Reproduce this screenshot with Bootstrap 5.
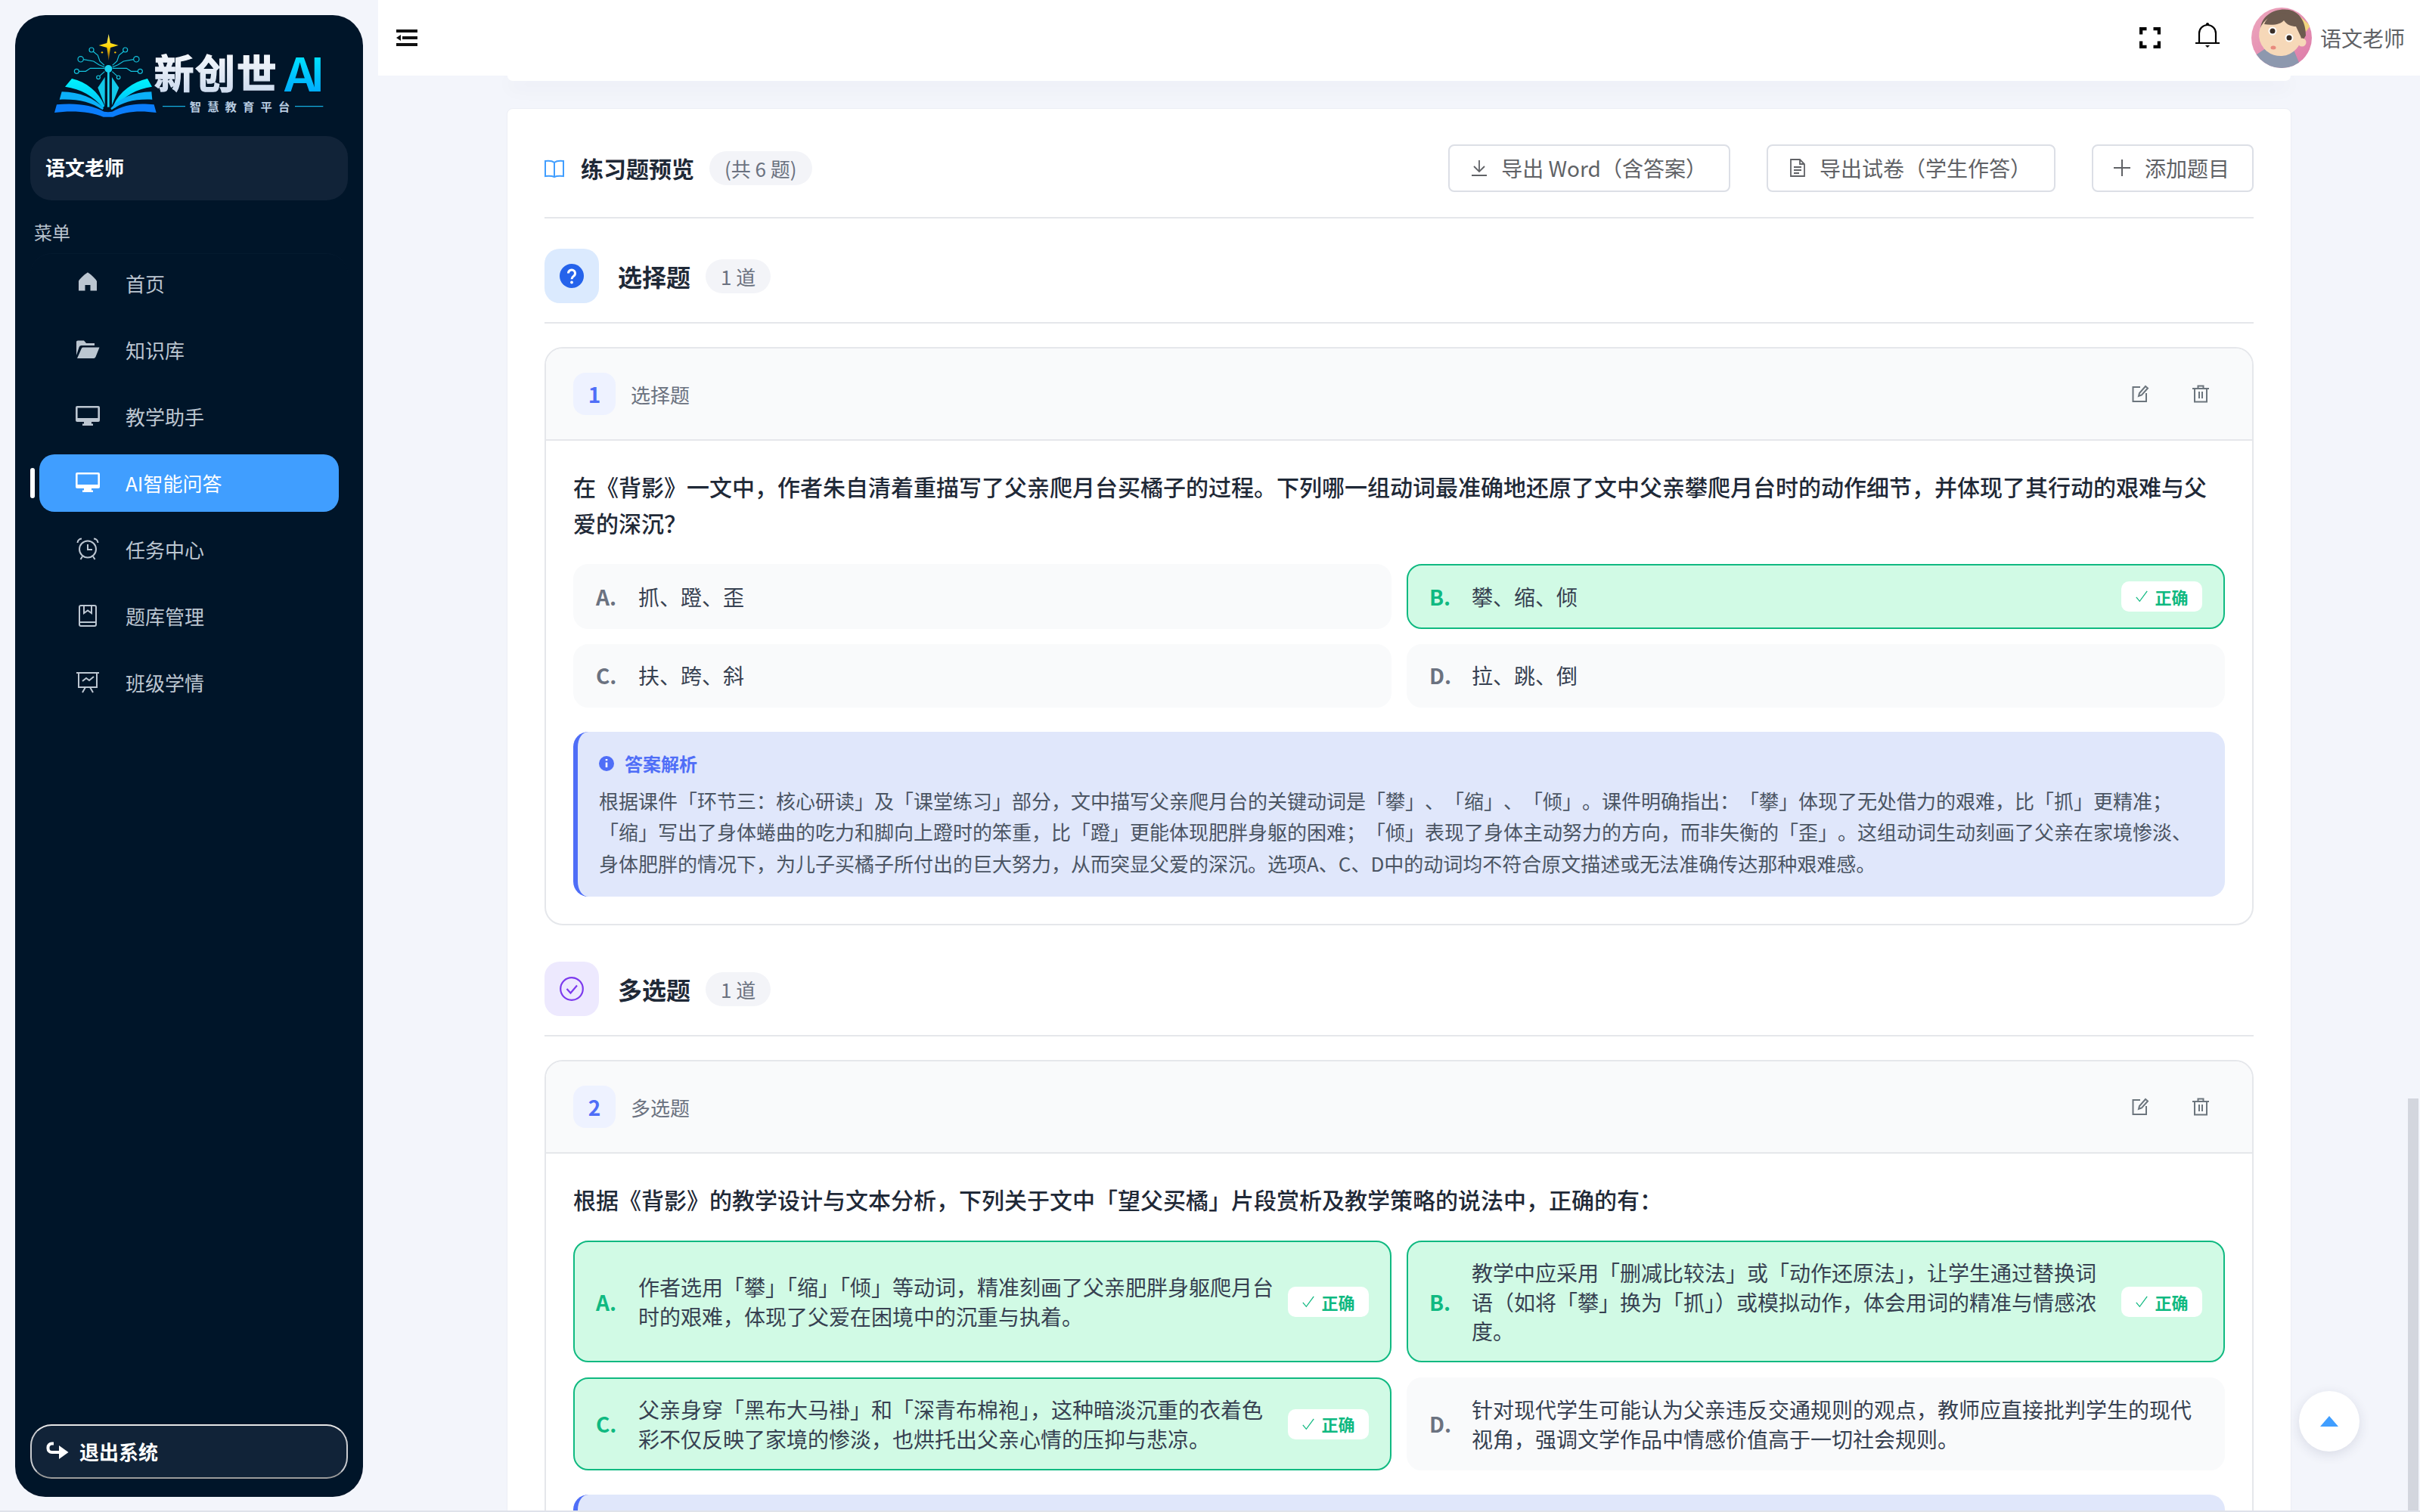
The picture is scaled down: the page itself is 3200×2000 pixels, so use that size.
<!DOCTYPE html>
<html lang="zh-CN">
<head>
<meta charset="UTF-8">
<title>新创世 AI - 练习题预览</title>
<link rel="stylesheet" href="https://cdn.jsdelivr.net/npm/bootstrap@5.3.0/dist/css/bootstrap.min.css">
<style>
html, body { height: 2000px; overflow: hidden; }
body { background: #f3f5fb; font-family: "Noto Sans CJK SC", sans-serif; color: #1f2937; }

/* sidebar */
.side-wrap { width: 500px; padding: 20px; height: 2000px; flex-shrink: 0; }
.side-box { background: #001529; border-radius: 40px; height: 1960px; padding: 10px 20px 24px; }
.side-logo { display: block; width: 420px; height: 150px; }
.side-user { height: 85px; background: #112338; border-radius: 28px; padding: 0 0 4px 20px; color: #fff; font-size: 26px; font-weight: 700; }
.side-title { font-size: 24px; color: #b9c3ce; margin: 25px 0 11px 5px; line-height: 34px; }
.side-menu { border-top: 1px solid #041a2f; border-radius: 28px 28px 0 0; padding-top: 1px; }
.side-item { height: 76px; margin: 0 12px 12px; padding: 0 0 2px 48px; border-radius: 20px; color: #bcc6d1; font-size: 26px; position: relative; text-decoration: none; }
.side-item svg { width: 32px; height: 32px; margin-right: 34px; flex-shrink: 0; }
.side-item.on { background: #409eff; color: #fff; }
.side-item.on::before { content: ""; position: absolute; left: -12px; top: 18px; width: 6px; height: 40px; background: #fff; border-radius: 3px; }
.side-exit { height: 72px; background: #112338; border: 2px solid #c9cbcf; border-top-color: #e6e6e6; border-bottom-color: #9b9b9b; border-radius: 28px; padding: 0 0 2px 19px; color: #fff; font-size: 26px; font-weight: 700; gap: 14px; }

/* top bar */
.top-bar { height: 100px; background: #fff; padding: 0 20px 0 24px; position: relative; z-index: 2; flex-shrink: 0; }
.top-name { font-size: 28px; color: #606266; margin-left: 11px; }

/* page */
.main-col { min-width: 0; height: 2000px; overflow: hidden; }
.page-body { padding: 0 170px; }
.prev-end { height: 7px; background: #fff; border-radius: 0 0 8px 8px; box-shadow: 0 8px 24px rgba(30, 40, 80, .07); margin: 0 1px 36px; }
.main-panel { border: 1px solid #eceef5; border-radius: 8px; padding: 47px 49px 0; }
.panel-head { padding-bottom: 33px; border-bottom: 2px solid #e5e7eb; margin-bottom: 40px; box-sizing: content-box; height: 63px; }
.panel-title { font-size: 30px; font-weight: 700; color: #1f2937; margin: 0 20px 0 22px; }
.count-pill { height: 45px; padding: 0 20px; border-radius: 23px; background: #f3f4f8; color: #6b7280; font-size: 26px; font-weight: 400; }
.tool-btn { height: 63px; padding: 0 32px 2px 28px; border: 2px solid #dcdfe6; border-radius: 8px; background: #fff; color: #606266; font-size: 28px; gap: 18px; white-space: nowrap; }
.tool-btn.wd { padding-right: 29px; }
.tool-btn.pp { padding-right: 30px; }
.tool-btn.ad { padding-right: 30px; padding-left: 26px; }
.kind-head { padding-bottom: 25px; border-bottom: 2px solid #e5e7eb; margin-bottom: 31px; }
.kind-ico { width: 72px; height: 72px; border-radius: 20px; flex-shrink: 0; }
.kind-ico.blue { background: #dbeafe; }
.kind-ico.violet { background: #ede9fe; }
.kind-name { font-size: 32px; font-weight: 700; margin: 0 20px 0 25px; color: #1f2937; }

.quest-card { border: 2px solid #e5e7eb; border-radius: 24px; margin-bottom: 48px; overflow: hidden; }
.quest-head { padding: 32px 36px; background: #f9fafb; border-bottom: 2px solid #e5e7eb; }
.quest-num { width: 56px; height: 56px; border-radius: 16px; background: #eef2ff; color: #4f6ef7; font-size: 28px; font-weight: 700; }
.quest-kind { font-size: 26px; color: #6b7280; margin-left: 20px; }
.quest-tools { gap: 56px; padding-right: 20px; }
.quest-body { padding: 36px; }
.quest-text { font-size: 30px; line-height: 48px; font-weight: 500; color: #1f2937; margin: 0 0 31px; }

.opt-grid { display: grid; grid-template-columns: 1fr 1fr; gap: 20px; margin-bottom: 32px; }
.opt-item { padding: 20.750px 28px; border: 2px solid #f9fafb; border-radius: 20px; background: #f9fafb; font-size: 28px; line-height: 38.500px; color: #374151; }
.opt-item b { width: 56px; flex-shrink: 0; color: #6b7280; font-weight: 700; }
.opt-item.good { background: #d1fae5; border-color: #10b981; }
.opt-item.good b { color: #10b981; }
.opt-good { width: 107px; height: 40px; margin-left: 14px; border-radius: 10px; background: #fff; color: #10b981; font-size: 22px; font-weight: 700; gap: 8px; flex-shrink: 0; }

.note-box { background: #e0e7fb; border-left: 6px solid #4f6ef7; border-radius: 20px; padding: 26px 34px 24px 28px; }
.note-title { font-size: 24px; line-height: 32px; font-weight: 700; color: #4f6ef7; margin-bottom: 12px; gap: 14px; }
.note-text { font-size: 26px; line-height: 41.600px; color: #4b5563; margin: 0; text-spacing-trim: space-all; }
.note-cut { height: 200px; }

/* overlays */
.to-top { position: fixed; left: 3040px; top: 1840px; width: 80px; height: 80px; border-radius: 50%; background: #fff; box-shadow: 0 4px 16px rgba(30, 40, 80, .12); z-index: 3; }
.scroll-thumb { position: fixed; left: 3184px; top: 1453px; width: 14px; height: 545px; background: #d3d6de; z-index: 3; }
.page-edge { position: fixed; left: 0; right: 0; bottom: 0; height: 2px; background: #dfe2ea; z-index: 4; }
</style>
</head>
<body>
<svg width="0" height="0" class="position-absolute">
  <symbol id="i-screen" viewBox="0 0 32 32"><path fill="currentColor" fill-rule="evenodd" d="M2 3h28a2 2 0 0 1 2 2v17a2 2 0 0 1-2 2H21v2.500h2V29H9v-2.500h2V24H2a2 2 0 0 1-2-2V5a2 2 0 0 1 2-2Zm.6 2.600V19h26.800V5.600Z"/></symbol>
  <symbol id="i-edit" viewBox="0 0 24 24"><path fill="none" stroke="currentColor" stroke-width="2" d="M12 3H2.500v19H20V11"/><path fill="none" stroke="currentColor" stroke-width="2" d="M10 15l1-4 8-9 3 2.500-8 9Z"/></symbol>
  <symbol id="i-trash" viewBox="0 0 24 24"><path fill="none" stroke="currentColor" stroke-width="2" d="M1 5h22M8.500 5V1.500h7V5M4 5v17.500h16V5M10 9v9M14 9v9"/></symbol>
  <symbol id="i-check" viewBox="0 0 20 20"><path fill="none" stroke="currentColor" stroke-width="1.400" d="M2 11l5 6L18 2"/></symbol>
  <symbol id="i-info" viewBox="0 0 20 20"><circle cx="10" cy="10" r="10" fill="#4f6ef7"/><path fill="none" stroke="#fff" stroke-width="2.600" d="M10 8.500V15M10 4v2.200"/></symbol>
</svg>

<div class="d-flex">
  <aside class="side-wrap">
    <div class="side-box d-flex flex-column">
      <svg class="side-logo" viewBox="0 0 1260 450">
        <defs>
          <linearGradient id="lgStar" x1="0" y1="0" x2="0" y2="1"><stop offset="0" stop-color="#fff36a"/><stop offset=".5" stop-color="#ffd400"/><stop offset="1" stop-color="#ff9a00" stop-opacity=".4"/></linearGradient>
          <linearGradient id="lgName" x1="0" y1="0" x2="0" y2="1"><stop offset="0" stop-color="#fff"/><stop offset="1" stop-color="#c6d6ec"/></linearGradient>
          <linearGradient id="lgAi" x1="0" y1="0" x2="0" y2="1"><stop offset="0" stop-color="#00f0ff"/><stop offset="1" stop-color="#009dff"/></linearGradient>
          <linearGradient id="lgPage" x1="0" y1="0" x2="0" y2="1"><stop offset="0" stop-color="#00f4ff"/><stop offset="1" stop-color="#00bdf5"/></linearGradient>
        </defs>
        <path fill="url(#lgStar)" d="M311 45l7 36 32 9-32 9-7 52-7-52-32-9 32-9Z"/>
        <circle cx="285" cy="118" r="3.500" fill="#ffc400"/><circle cx="337" cy="118" r="3.500" fill="#ffc400"/>
        <g fill="none" stroke="#14c4de" stroke-width="3.500">
          <circle cx="243" cy="108" r="9"/><path d="M250 115l18 14 8 24 18 16"/>
          <circle cx="377" cy="108" r="9"/><path d="M370 115l-18 14-8 24-18 16"/>
          <circle cx="200" cy="145" r="11"/><path d="M211 146l40 7 22 14 22 9"/>
          <circle cx="421" cy="145" r="11"/><path d="M410 146l-40 7-22 14-22 9"/>
          <circle cx="184" cy="193" r="9"/><path d="M193 193h27l18-12h57"/>
          <circle cx="436" cy="193" r="9"/><path d="M427 193h-27l-18-12h-56"/>
          <circle cx="270" cy="217" r="7"/><path d="M275 212l20-18"/>
          <circle cx="350" cy="217" r="7"/><path d="M345 212l-20-18"/>
        </g>
        <circle cx="310" cy="183" r="15" fill="#19d3f0"/>
        <path fill="#19d3f0" d="M306 190h8v145h-8Z"/>
        <path fill="#12c8e8" d="M296 216v112l-28-70Z M324 216v112l28-70Z"/>
        <path fill="url(#lgPage)" d="M138 254l27-32c58 14 104 50 130 108l-7 8c-38-48-86-74-150-84Z"/>
        <path fill="url(#lgPage)" d="M483 254l-18-32c-58 14-110 50-136 108l7 8c38-48 83-74 147-84Z"/>
        <path fill="#0bb0f7" d="M116 305l9-31c72 2 128 24 166 66l-4 6c-46-32-100-44-171-41Z"/>
        <path fill="#0bb0f7" d="M484 305l-3-31c-72 2-124 24-162 66l4 6c46-32 90-44 161-41Z"/>
        <path fill="#0a7dfb" d="M96 357l9-32c78-8 140 2 188 28l16 2 16-2c48-26 92-36 166-28l9 32c-70-10-122-4-172 17h-38c-50-21-124-27-194-17Z"/>
        <text x="491" y="262" font-family="'Noto Sans CJK SC', sans-serif" font-weight="700" font-size="158" fill="url(#lgName)" stroke="url(#lgName)" stroke-width="4" textLength="486">新创世</text>
        <text x="1003" y="272" font-family="Inter, sans-serif" font-weight="600" font-size="186" fill="url(#lgAi)" textLength="162">AI</text>
        <path stroke="#15aee0" stroke-width="3.500" d="M525 332h90M1050 332h112"/>
        <text x="632" y="350" font-family="'Noto Sans CJK SC', sans-serif" font-weight="700" font-size="46" fill="#b7cbe0" textLength="398">智慧教育平台</text>
      </svg>

      <div class="side-user d-flex align-items-center">语文老师</div>
      <div class="side-title">菜单</div>

      <nav class="side-menu flex-grow-1">
        <a class="side-item d-flex align-items-center" href="#">
          <svg viewBox="0 0 32 32"><path fill="currentColor" d="M16 2.500C14.500 2.500 4 12 4 14v12.500h8.500V19h7v7.500H28V14C28 12 17.500 2.500 16 2.500Z"/></svg>首页
        </a>
        <a class="side-item d-flex align-items-center" href="#">
          <svg viewBox="0 0 32 32"><path fill="currentColor" d="M1 24V6q0-1.500 2-1.500h8L14 8h11v3H7.500q-2 0-2.800 2Zm1 4l6-13.500q.5-1 2-1h21.500l-5 12.500q-1 2-2.500 2Z"/></svg>知识库
        </a>
        <a class="side-item d-flex align-items-center" href="#">
          <svg viewBox="0 0 32 32"><use href="#i-screen"/></svg>教学助手
        </a>
        <a class="side-item on d-flex align-items-center" href="#">
          <svg viewBox="0 0 32 32"><use href="#i-screen"/></svg>AI智能问答
        </a>
        <a class="side-item d-flex align-items-center" href="#">
          <svg viewBox="0 0 32 32"><g fill="none" stroke="currentColor" stroke-width="2"><circle cx="16" cy="16.500" r="11"/><path d="M16 10v7h6M2.500 8Q3 3 8 2.500M29.500 8Q29 3 24 2.500M9 26l-2.500 4M23 26l2.500 4"/></g></svg>任务中心
        </a>
        <a class="side-item d-flex align-items-center" href="#">
          <svg viewBox="0 0 32 32"><g fill="none" stroke="currentColor" stroke-width="2"><rect x="5" y="3" width="22" height="27" rx="2"/><path d="M5 25h22M11 3v10l5-3.500 5 3.500V3"/></g></svg>题库管理
        </a>
        <a class="side-item d-flex align-items-center" href="#">
          <svg viewBox="0 0 32 32"><g fill="none" stroke="currentColor" stroke-width="2"><path d="M1 4h30M4 4v19h24V4M9 15l5-4 4 3 6-5M13 23l-4 7M19 23l4 7"/></g></svg>班级学情
        </a>
      </nav>

      <div class="side-exit d-flex align-items-center">
        <svg width="30" height="24" viewBox="0 0 30 24"><path fill="none" stroke="#fff" stroke-width="4" d="M10 2.500H7.500a5 5 0 0 0-5 5V9a5 5 0 0 0 5 5H18"/><path fill="#fff" d="M17 5l12.500 9L17 23Z"/></svg>
        退出系统
      </div>
    </div>
  </aside>

  <div class="main-col flex-grow-1 d-flex flex-column">
    <header class="top-bar d-flex align-items-center">
      <svg width="28" height="24" viewBox="0 0 28 24"><path fill="#111" d="M0 1h28v4H0Zm8 9h20v4H8Zm-8 2l6-4v8Zm0 7h28v4H0Z"/></svg>
      <svg class="ms-auto" width="28" height="28" viewBox="0 0 28 28" style="margin-right:46px"><path fill="none" stroke="#000" stroke-width="4.500" d="M9.500 2H2v7.500M18.500 2H26v7.500M9.500 26H2v-7.500M18.500 26H26v-7.500"/></svg>
      <svg width="32" height="34" viewBox="0 0 32 34" style="margin:-6px 42px 0 0"><path fill="none" stroke="#000" stroke-width="2.200" d="M5 26V14a11 11 0 0 1 22 0v12M0 27h32"/><circle cx="16" cy="2" r="2" fill="#000"/><path fill="#000" d="M13 30h6l-3 3Z"/></svg>
      <svg width="80" height="80" viewBox="0 0 80 80" class="rounded-circle">
        <defs><linearGradient id="lgAv" x1="0" y1="0" x2="1" y2="1"><stop offset="0" stop-color="#eda7bd"/><stop offset="1" stop-color="#dd7aa8"/></linearGradient></defs>
        <rect width="80" height="80" fill="url(#lgAv)"/>
        <path fill="#f2d57f" d="M58 6l20 18-6 8Z"/>
        <path fill="#8d98ae" d="M4 64l18-12 34 4 10 24H10Z"/>
        <path fill="#6d5b4f" d="M12 30C12 10 32 0 50 3c14 3 22 16 22 34l-6 10-8-22c-8 0-14-2-20-6-2 6-10 8-24 12Z"/>
        <ellipse cx="38" cy="37" rx="28" ry="27" fill="#f6d8b8" transform="rotate(18 38 37)"/>
        <path fill="#6d5b4f" d="M17 22C22 6 50 2 62 16c5 7 7 16 5 26l-8-17c-6 0-12-2-16-8-4 5-14 7-26 5Z"/>
        <circle cx="67" cy="46" r="5.500" fill="#f6d8b8"/>
        <circle cx="28" cy="31" r="5.500" fill="#fff"/><circle cx="28" cy="31" r="3.500" fill="#3a2e28"/>
        <circle cx="50" cy="40" r="5.500" fill="#fff"/><circle cx="50" cy="40" r="3.500" fill="#3a2e28"/>
        <ellipse cx="29" cy="53" rx="3.500" ry="2.500" fill="#e88a7d"/>
      </svg>
      <span class="top-name">语文老师</span>
    </header>

    <main class="page-body">
      <div class="prev-end"></div>
      <div class="main-panel bg-white">
        <div class="panel-head d-flex align-items-center">
          <svg width="26" height="24" viewBox="0 0 26 24"><path fill="none" stroke="#409eff" stroke-width="2" d="M13 4C10 1.500 5 1.500 1 2v20c4-.5 9-.5 12 1 3-1.500 8-1.500 12-1V2c-4-.5-9-.5-12 2Zm0 0v19"/></svg>
          <span class="panel-title">练习题预览</span>
          <span class="count-pill d-flex align-items-center">(共 6 题)</span>
          <div class="ms-auto d-flex" style="gap:48px">
            <button class="btn tool-btn wd d-flex align-items-center">
              <svg width="22" height="22" viewBox="0 0 22 22"><path fill="none" stroke="#606266" stroke-width="1.800" d="M11 1v14M4 9l7 7 7-7M1 21h20"/></svg>导出 Word（含答案）
            </button>
            <button class="btn tool-btn pp d-flex align-items-center">
              <svg width="22" height="24" viewBox="0 0 22 24"><path fill="none" stroke="#606266" stroke-width="1.800" d="M2 1h12l6 6v16H2ZM14 1v6h6M6 11h10M6 15h10M6 19h7"/></svg>导出试卷（学生作答）
            </button>
            <button class="btn tool-btn ad d-flex align-items-center">
              <svg width="24" height="24" viewBox="0 0 24 24"><path fill="none" stroke="#606266" stroke-width="2" d="M12 1v22M1 12h22"/></svg>添加题目
            </button>
          </div>
        </div>

        <div class="kind-head d-flex align-items-center">
          <div class="kind-ico blue d-flex align-items-center justify-content-center">
            <svg width="32" height="32" viewBox="0 0 32 32"><circle cx="16" cy="16" r="16" fill="#2563eb"/><path fill="none" stroke="#fff" stroke-width="3" d="M11.500 12.500a4.500 4.500 0 1 1 7 3.700c-1.700 1.200-2.500 2-2.500 4"/><circle cx="16" cy="24.500" r="1.900" fill="#fff"/></svg>
          </div>
          <span class="kind-name">选择题</span>
          <span class="count-pill d-flex align-items-center">1 道</span>
        </div>

        <section class="quest-card">
          <div class="quest-head d-flex align-items-center">
            <span class="quest-num d-flex align-items-center justify-content-center">1</span>
            <span class="quest-kind">选择题</span>
            <div class="quest-tools ms-auto d-flex text-secondary">
              <svg width="24" height="24"><use href="#i-edit"/></svg>
              <svg width="24" height="24"><use href="#i-trash"/></svg>
            </div>
          </div>
          <div class="quest-body">
            <p class="quest-text">在《背影》一文中，作者朱自清着重描写了父亲爬月台买橘子的过程。下列哪一组动词最准确地还原了文中父亲攀爬月台时的动作细节，并体现了其行动的艰难与父爱的深沉？</p>
            <div class="opt-grid">
              <div class="opt-item d-flex align-items-center"><b>A.</b><span>抓、蹬、歪</span></div>
              <div class="opt-item good d-flex align-items-center"><b>B.</b><span class="flex-grow-1">攀、缩、倾</span><span class="opt-good d-flex align-items-center justify-content-center"><svg width="18" height="18"><use href="#i-check"/></svg>正确</span></div>
              <div class="opt-item d-flex align-items-center"><b>C.</b><span>扶、跨、斜</span></div>
              <div class="opt-item d-flex align-items-center"><b>D.</b><span>拉、跳、倒</span></div>
            </div>
            <div class="note-box">
              <div class="note-title d-flex align-items-center"><svg width="20" height="20"><use href="#i-info"/></svg>答案解析</div>
              <p class="note-text">根据课件「环节三：核心研读」及「课堂练习」部分，文中描写父亲爬月台的关键动词是「攀」、「缩」、「倾」。课件明确指出：「攀」体现了无处借力的艰难，比「抓」更精准；「缩」写出了身体蜷曲的吃力和脚向上蹬时的笨重，比「蹬」更能体现肥胖身躯的困难；「倾」表现了身体主动努力的方向，而非失衡的「歪」。这组动词生动刻画了父亲在家境惨淡、身体肥胖的情况下，为儿子买橘子所付出的巨大努力，从而突显父爱的深沉。选项A、C、D中的动词均不符合原文描述或无法准确传达那种艰难感。</p>
            </div>
          </div>
        </section>

        <div class="kind-head d-flex align-items-center">
          <div class="kind-ico violet d-flex align-items-center justify-content-center">
            <svg width="32" height="32" viewBox="0 0 32 32"><circle cx="16" cy="16" r="14.800" fill="none" stroke="#7c3aed" stroke-width="2.200"/><path fill="none" stroke="#7c3aed" stroke-width="2.200" d="M9.500 16l5 5.500 8.500-10"/></svg>
          </div>
          <span class="kind-name">多选题</span>
          <span class="count-pill d-flex align-items-center">1 道</span>
        </div>

        <section class="quest-card">
          <div class="quest-head d-flex align-items-center">
            <span class="quest-num d-flex align-items-center justify-content-center">2</span>
            <span class="quest-kind">多选题</span>
            <div class="quest-tools ms-auto d-flex text-secondary">
              <svg width="24" height="24"><use href="#i-edit"/></svg>
              <svg width="24" height="24"><use href="#i-trash"/></svg>
            </div>
          </div>
          <div class="quest-body">
            <p class="quest-text">根据《背影》的教学设计与文本分析，下列关于文中「望父买橘」片段赏析及教学策略的说法中，正确的有：</p>
            <div class="opt-grid">
              <div class="opt-item good d-flex align-items-center"><b>A.</b><span class="flex-grow-1">作者选用「攀」「缩」「倾」等动词，精准刻画了父亲肥胖身躯爬月台时的艰难，体现了父爱在困境中的沉重与执着。</span><span class="opt-good d-flex align-items-center justify-content-center"><svg width="18" height="18"><use href="#i-check"/></svg>正确</span></div>
              <div class="opt-item good d-flex align-items-center"><b>B.</b><span class="flex-grow-1">教学中应采用「删减比较法」或「动作还原法」，让学生通过替换词语（如将「攀」换为「抓」）或模拟动作，体会用词的精准与情感浓度。</span><span class="opt-good d-flex align-items-center justify-content-center"><svg width="18" height="18"><use href="#i-check"/></svg>正确</span></div>
              <div class="opt-item good d-flex align-items-center"><b>C.</b><span class="flex-grow-1">父亲身穿「黑布大马褂」和「深青布棉袍」，这种暗淡沉重的衣着色彩不仅反映了家境的惨淡，也烘托出父亲心情的压抑与悲凉。</span><span class="opt-good d-flex align-items-center justify-content-center"><svg width="18" height="18"><use href="#i-check"/></svg>正确</span></div>
              <div class="opt-item d-flex align-items-center"><b>D.</b><span>针对现代学生可能认为父亲违反交通规则的观点，教师应直接批判学生的现代视角，强调文学作品中情感价值高于一切社会规则。</span></div>
            </div>
            <div class="note-box note-cut"></div>
          </div>
        </section>
      </div>
    </main>
  </div>
</div>

<div class="to-top d-flex align-items-center justify-content-center">
  <svg width="24" height="14" viewBox="0 0 24 14"><path fill="#409eff" d="M12 0l12 14H0Z"/></svg>
</div>
<div class="scroll-thumb"></div>
<div class="page-edge"></div>

<script src="https://cdn.jsdelivr.net/npm/bootstrap@5.3.0/dist/js/bootstrap.bundle.min.js"></script>
</body>
</html>
